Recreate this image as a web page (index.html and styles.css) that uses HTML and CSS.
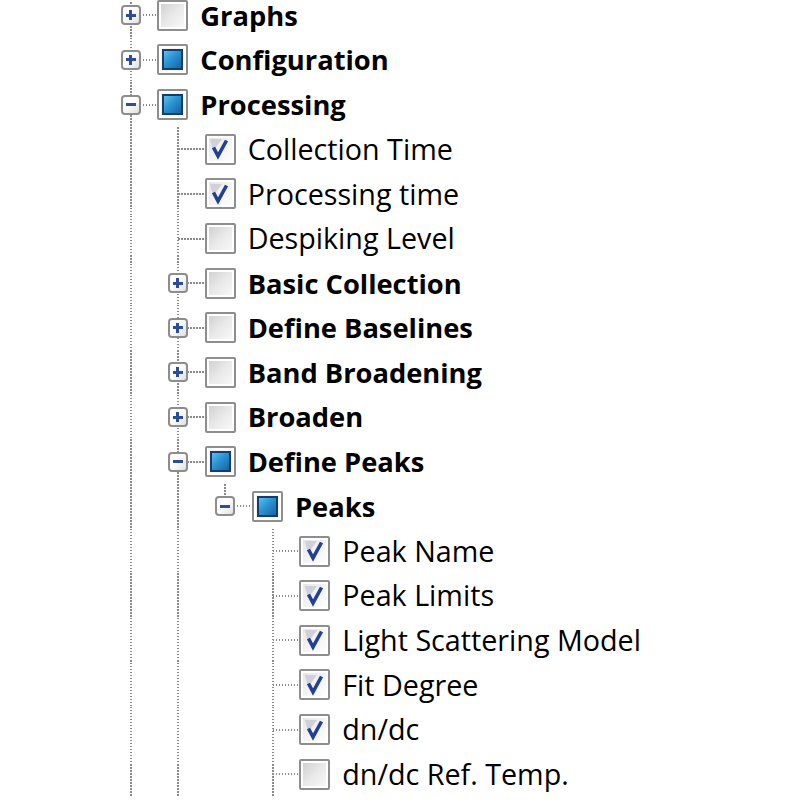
FILE: index.html
```html
<!DOCTYPE html>
<html>
<head>
<meta charset="utf-8">
<link rel="stylesheet" href="styles.css">
</head>
<body>
<div class="tree">
  <div class="row">
    <span class="c"><span class="exp plus"></span></span>
    <span class="cb off"></span><span class="lbl b">Graphs</span>
  </div>
  <div class="row">
    <span class="c"><span class="exp plus"></span></span>
    <span class="cb tri"><span class="sq"></span></span><span class="lbl b">Configuration</span>
  </div>
  <div class="row">
    <span class="c"><span class="exp minus"></span></span>
    <span class="cb tri"><span class="sq"></span></span><span class="lbl b">Processing</span>
  </div>
  <div class="row">
    <span class="g line"></span><span class="c"></span>
    <span class="cb on"><svg viewBox="0 0 26 26"><path class="ghost" d="M3 3h12L6 15z"/><path class="tick" d="M6.5 11.5 L11 20 L19.5 4.5"/></svg></span><span class="lbl">Collection Time</span>
  </div>
  <div class="row">
    <span class="g line"></span><span class="c"></span>
    <span class="cb on"><svg viewBox="0 0 26 26"><path class="ghost" d="M3 3h12L6 15z"/><path class="tick" d="M6.5 11.5 L11 20 L19.5 4.5"/></svg></span><span class="lbl">Processing time</span>
  </div>
  <div class="row">
    <span class="g line"></span><span class="c"></span>
    <span class="cb off"></span><span class="lbl">Despiking Level</span>
  </div>
  <div class="row">
    <span class="g line"></span><span class="c"><span class="exp plus"></span></span>
    <span class="cb off"></span><span class="lbl b">Basic Collection</span>
  </div>
  <div class="row">
    <span class="g line"></span><span class="c"><span class="exp plus"></span></span>
    <span class="cb off"></span><span class="lbl b">Define Baselines</span>
  </div>
  <div class="row">
    <span class="g line"></span><span class="c"><span class="exp plus"></span></span>
    <span class="cb off"></span><span class="lbl b">Band Broadening</span>
  </div>
  <div class="row">
    <span class="g line"></span><span class="c"><span class="exp plus"></span></span>
    <span class="cb off"></span><span class="lbl b">Broaden</span>
  </div>
  <div class="row">
    <span class="g line"></span><span class="c"><span class="exp minus"></span></span>
    <span class="cb tri"><span class="sq"></span></span><span class="lbl b">Define Peaks</span>
  </div>
  <div class="row">
    <span class="g line"></span><span class="g line"></span><span class="c last"><span class="exp minus"></span></span>
    <span class="cb tri"><span class="sq"></span></span><span class="lbl b">Peaks</span>
  </div>
  <div class="row">
    <span class="g line"></span><span class="g line"></span><span class="g"></span><span class="c"></span>
    <span class="cb on"><svg viewBox="0 0 26 26"><path class="ghost" d="M3 3h12L6 15z"/><path class="tick" d="M6.5 11.5 L11 20 L19.5 4.5"/></svg></span><span class="lbl">Peak Name</span>
  </div>
  <div class="row">
    <span class="g line"></span><span class="g line"></span><span class="g"></span><span class="c"></span>
    <span class="cb on"><svg viewBox="0 0 26 26"><path class="ghost" d="M3 3h12L6 15z"/><path class="tick" d="M6.5 11.5 L11 20 L19.5 4.5"/></svg></span><span class="lbl">Peak Limits</span>
  </div>
  <div class="row">
    <span class="g line"></span><span class="g line"></span><span class="g"></span><span class="c"></span>
    <span class="cb on"><svg viewBox="0 0 26 26"><path class="ghost" d="M3 3h12L6 15z"/><path class="tick" d="M6.5 11.5 L11 20 L19.5 4.5"/></svg></span><span class="lbl">Light Scattering Model</span>
  </div>
  <div class="row">
    <span class="g line"></span><span class="g line"></span><span class="g"></span><span class="c"></span>
    <span class="cb on"><svg viewBox="0 0 26 26"><path class="ghost" d="M3 3h12L6 15z"/><path class="tick" d="M6.5 11.5 L11 20 L19.5 4.5"/></svg></span><span class="lbl">Fit Degree</span>
  </div>
  <div class="row">
    <span class="g line"></span><span class="g line"></span><span class="g"></span><span class="c"></span>
    <span class="cb on"><svg viewBox="0 0 26 26"><path class="ghost" d="M3 3h12L6 15z"/><path class="tick" d="M6.5 11.5 L11 20 L19.5 4.5"/></svg></span><span class="lbl">dn/dc</span>
  </div>
  <div class="row">
    <span class="g line"></span><span class="g line"></span><span class="g"></span><span class="c"></span>
    <span class="cb off"></span><span class="lbl">dn/dc Ref. Temp.</span>
  </div>
</div>
</body>
</html>
```

FILE: styles.css
```css
html, body {
  margin: 0;
  padding: 0;
  background: #fff;
  overflow: hidden;
}

.tree {
  margin-top: -7px;
  padding-left: 107px;
  font-family: "Open Sans", "Noto Sans", sans-serif;
  font-size: 28.7px;
  font-weight: 500;
  color: #000;
}

.row {
  display: flex;
  align-items: center;
  height: 44.65px;
}

.g, .c {
  position: relative;
  flex: 0 0 47.33px;
  align-self: stretch;
  display: flex;
  align-items: center;
  justify-content: center;
}

.g.line::before, .c::before {
  content: "";
  position: absolute;
  left: calc(50% - 1px);
  top: 0;
  bottom: 0;
  width: 2px;
  background: repeating-linear-gradient(to bottom, #8a8a8a 0 1.5px, transparent 1.5px 3px);
}

.c.last::before {
  bottom: 50%;
}

.c::after {
  content: "";
  position: absolute;
  left: 50%;
  right: -4px;
  top: calc(50% - 1px);
  height: 2px;
  background: repeating-linear-gradient(to right, #8a8a8a 0 1.5px, transparent 1.5px 3px);
}

.exp {
  position: relative;
  z-index: 1;
  box-sizing: border-box;
  width: 20px;
  height: 20px;
  border: 2.5px solid #8d8d8d;
  border-radius: 4px;
  background: linear-gradient(135deg, #ffffff 40%, #e0e0e0);
  display: flex;
  align-items: center;
  justify-content: center;
}

.exp::before {
  content: "";
  width: 10px;
  height: 3px;
  background: #2c4c9c;
}

.exp.plus::after {
  content: "";
  position: absolute;
  width: 3px;
  height: 10px;
  background: #2c4c9c;
}

.cb {
  box-sizing: border-box;
  flex: 0 0 31px;
  height: 31px;
  margin-left: 3px;
  border: 2.5px solid #8e8e8e;
  border-radius: 2px;
  box-shadow: inset 0 0 0 2px #ffffff;
  background: linear-gradient(135deg, #cdcdcd 0%, #e9e9e9 50%, #fbfbfb 100%);
  display: flex;
  align-items: center;
  justify-content: center;
}

.cb.tri {
  background: #f4f4f4;
}

.cb .sq {
  box-sizing: border-box;
  width: 21px;
  height: 21px;
  border: 2px solid #163c6c;
  background: linear-gradient(135deg, #5cc0ef 0%, #2a94d2 45%, #1763a4 100%);
}

.cb svg {
  width: 26px;
  height: 26px;
}

.cb.on {
  background: linear-gradient(135deg, #e4e4e4 0%, #f6f6f6 60%, #ffffff 100%);
}

.ghost {
  fill: #d0d0d8;
}

.tick {
  fill: none;
  stroke: #233f96;
  stroke-width: 3.6;
  stroke-linejoin: miter;
  stroke-linecap: butt;
}

.lbl {
  margin-left: 12px;
  white-space: nowrap;
  line-height: 1;
}

.lbl.b {
  font-weight: 700;
  font-size: 27.3px;
}
```
